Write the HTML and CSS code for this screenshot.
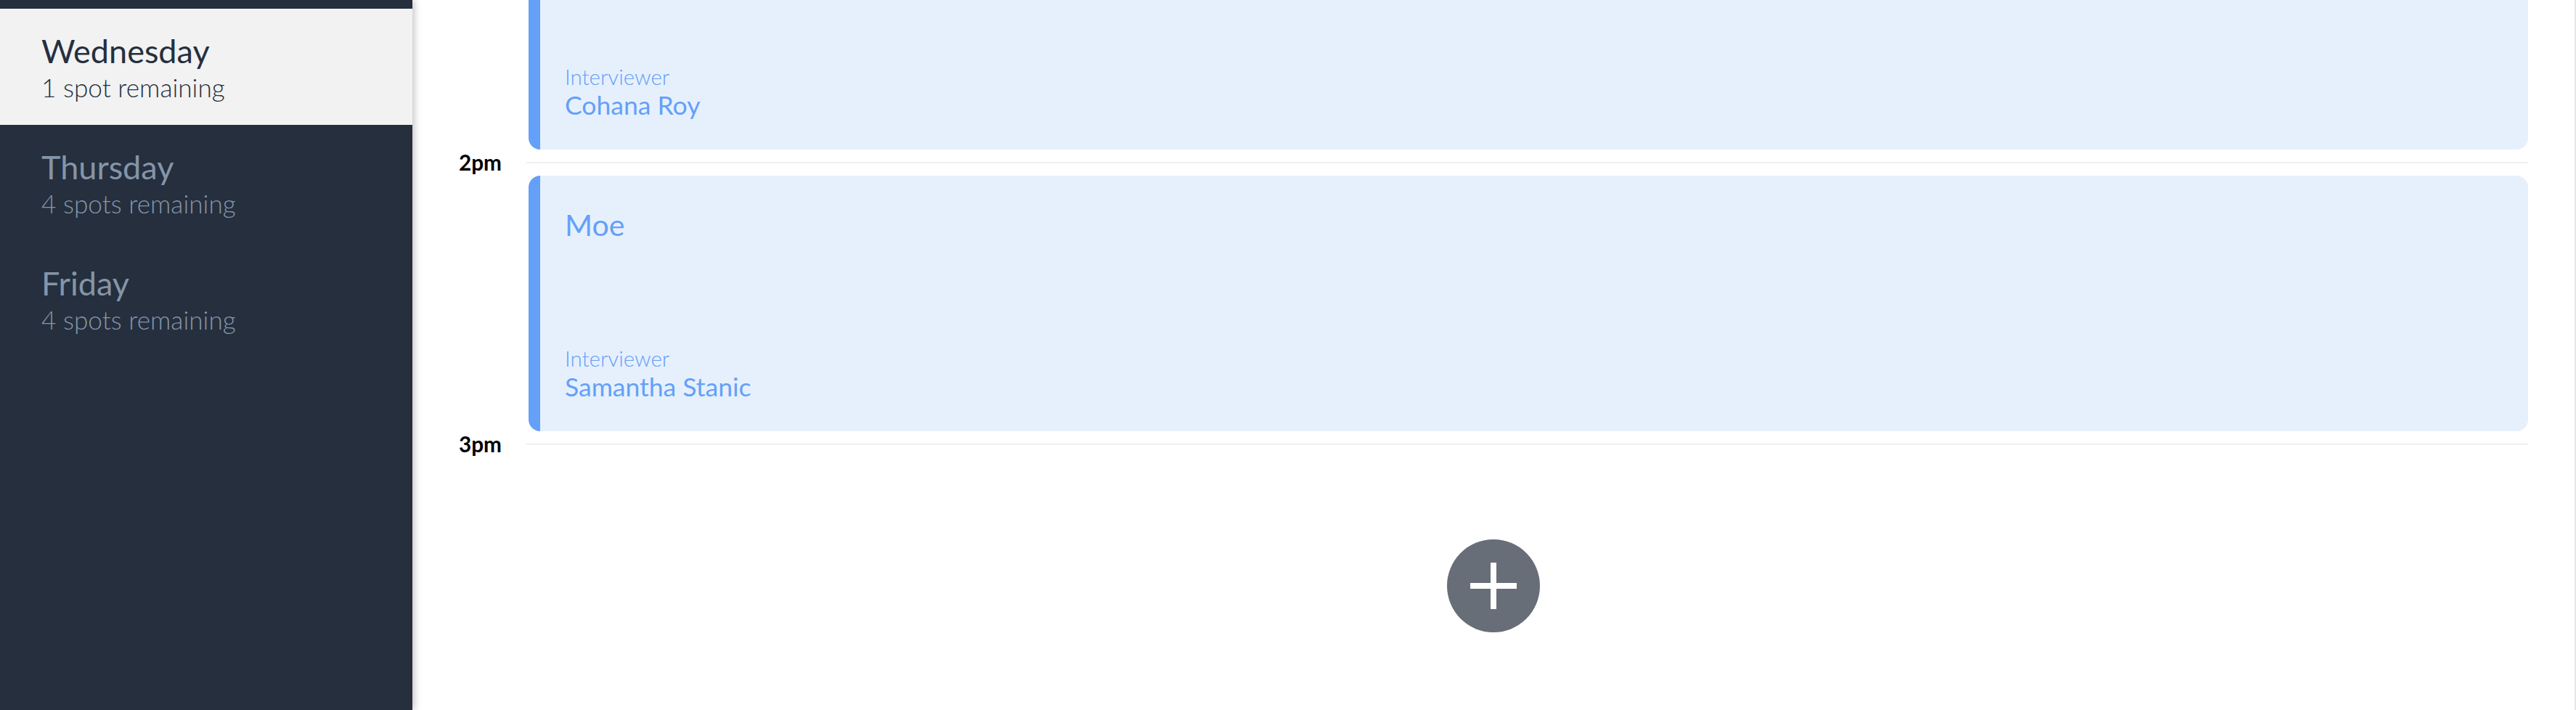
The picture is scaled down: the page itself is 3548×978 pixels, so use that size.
FILE: index.html
```html
<!DOCTYPE html>
<html lang="en">
<head>
<meta charset="utf-8">
<title>Interview schedule</title>
<link rel="stylesheet" href="styles.css">
</head>
<body>
<div class="app">
  <nav class="sidebar">
    <ul class="days">
      <li class="day day--selected">
        <h2 class="day__name">Wednesday</h2>
        <p class="day__spots">1 spot remaining</p>
      </li>
      <li class="day">
        <h2 class="day__name">Thursday</h2>
        <p class="day__spots">4 spots remaining</p>
      </li>
      <li class="day">
        <h2 class="day__name">Friday</h2>
        <p class="day__spots">4 spots remaining</p>
      </li>
    </ul>
  </nav>
  <main class="schedule">
    <section class="timeline">
      <article class="hour">
        <div class="appointment appointment--clipped">
          <div class="appointment__interviewer">
            <span class="appointment__caption">Interviewer</span>
            <span class="appointment__person">Cohana Roy</span>
          </div>
        </div>
      </article>
      <article class="hour">
        <header class="hour__head"><span class="hour__label">2pm</span><span class="hour__line"></span></header>
        <div class="appointment">
          <h3 class="appointment__student">Moe</h3>
          <div class="appointment__interviewer">
            <span class="appointment__caption">Interviewer</span>
            <span class="appointment__person">Samantha Stanic</span>
          </div>
        </div>
      </article>
      <article class="hour hour--last">
        <header class="hour__head"><span class="hour__label">3pm</span><span class="hour__line"></span></header>
      </article>
    </section>
    <div class="actions">
      <button class="add" type="button" aria-label="Add appointment">
        <svg class="add__icon" viewBox="0 0 64 64" width="64" height="64" aria-hidden="true">
          <rect x="0" y="28" width="64" height="8" fill="#ffffff"/>
          <rect x="28" y="0" width="8" height="64" fill="#ffffff"/>
        </svg>
      </button>
    </div>
  </main>
</div>
</body>
</html>
```
FILE: styles.css
```css
* { box-sizing: border-box; }

html, body {
  margin: 0;
  padding: 0;
  height: 978px;
  overflow: hidden;
  background: #ffffff;
  font-family: Lato, "Open Sans", sans-serif;
}

.app {
  display: flex;
  height: 978px;
}

/* ---------- sidebar ---------- */
.sidebar {
  width: 568px;
  flex: 0 0 568px;
  background: #252f3e;
  padding-top: 12px;
  box-shadow: 3px 0 9px rgba(0, 0, 0, 0.22);
  position: relative;
  z-index: 2;
}

.days {
  list-style: none;
  margin: 0;
  padding: 0;
}

.day {
  height: 160px;
  padding: 31px 0 0 57px;
  color: #8595a8;
}

.day--selected {
  background: #f2f2f2;
  color: #252f3e;
}

.day__name {
  margin: 0;
  font-size: 45px;
  font-weight: 400;
  line-height: 54px;
}

.day__spots {
  margin: 2px 0 0;
  font-size: 35.2px;
  font-weight: 300;
  line-height: 42px;
}

/* ---------- schedule ---------- */
.schedule {
  flex: 1;
  display: flex;
  flex-direction: column;
  border-right: 2px solid #e6e6e6;
}

.timeline {
  padding: 0 64px 0 64px;
}

.hour__head {
  display: grid;
  grid-template-columns: 93px 1fr;
  align-items: center;
  height: 36px;
}

.hour__label {
  font-size: 29.7px;
  font-weight: 700;
  line-height: 36px;
  color: #000000;
}

.hour__line {
  height: 2px;
  background: #efefef;
}

.appointment {
  height: 352px;
  margin-left: 96px;
  background: #e6f0fd;
  border-left: 16px solid #64a0f8;
  border-radius: 16px;
  padding: 43px 0 40px 34px;
  display: flex;
  flex-direction: column;
  color: #64a0f8;
}

/* first card is scrolled partly out of view: only its lower 206px show */
.appointment--clipped {
  height: 206px;
  border-top-left-radius: 0;
  border-top-right-radius: 0;
}

.appointment__student {
  margin: 0;
  font-size: 41px;
  font-weight: 400;
  line-height: 50px;
}

.appointment__interviewer {
  margin-top: auto;
  display: flex;
  flex-direction: column;
}

.appointment__caption {
  font-size: 29.5px;
  font-weight: 300;
  line-height: 36px;
}

.appointment__person {
  font-size: 35.5px;
  font-weight: 400;
  line-height: 42px;
}

/* ---------- add button ---------- */
.actions {
  display: flex;
  justify-content: center;
  padding-top: 113px;
}

.add {
  width: 128px;
  height: 128px;
  border: 0;
  border-radius: 50%;
  background: #686e78;
  display: flex;
  align-items: center;
  justify-content: center;
  padding: 0;
  cursor: pointer;
}

.add__icon {
  display: block;
}
```
